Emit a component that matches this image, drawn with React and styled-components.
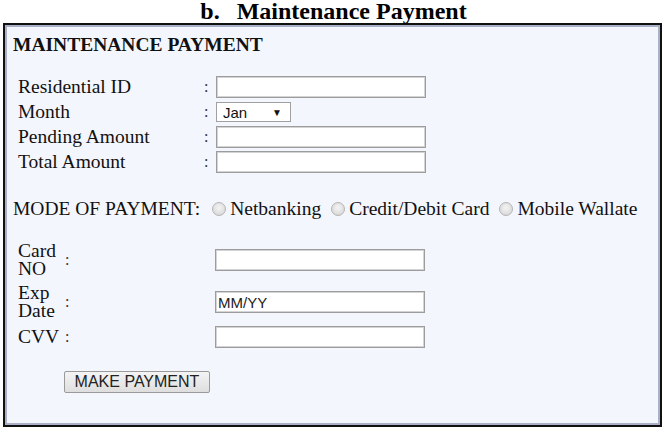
import React from "react";
import styled, { createGlobalStyle } from "styled-components";

const Global = createGlobalStyle`
  html, body { margin: 0; padding: 0; background: #fff; }
  body { font-family: "Liberation Serif", "Times New Roman", serif; color: #111; }
  * { box-sizing: border-box; }
`;

const Page = styled.div`
  width: 665px;
  height: 432px;
  overflow: hidden;
`;

const Caption = styled.h2`
  margin: 0;
  height: 23px;
  display: flex;
  justify-content: center;
  align-items: flex-start;
  gap: 17px;
  font-size: 24px;
  line-height: 23px;
  font-weight: bold;
  color: #000;
  padding-left: 2px;
`;

const Frame = styled.div`
  margin-left: 3px;
  width: 659px;
  height: 404px;
  border: 2px solid #111;
  box-shadow: inset 0 0 0 2px #aab0c8;
  background: #f4f6fd;
  padding: 9px 8px 0 8px;
`;

const Heading = styled.div`
  font-size: 19.5px;
  font-weight: bold;
  line-height: 22px;
  margin-bottom: 20px;
`;

const InfoGrid = styled.div`
  display: grid;
  grid-template-columns: 186px 12px 212px;
  grid-auto-rows: 22px;
  row-gap: 3px;
  padding-left: 5px;
  align-items: center;
`;

const Label = styled.div`
  font-size: 19.5px;
  line-height: 22px;
`;

const Colon = styled.div`
  font-size: 16px;
  line-height: 22px;
  color: #333;
`;

const TextBox = styled.input`
  display: block;
  width: 210px;
  height: 22px;
  border: 1px solid #9c9c9c;
  box-shadow: inset 0 0 0 1px #d4d4d4;
  background: #fff;
  padding: 0 2px;
  font-family: "Liberation Sans", Arial, sans-serif;
  font-size: 15px;
  color: #222;
  outline: none;
  &::placeholder { color: #222; }
`;

const Select = styled.div`
  width: 75px;
  height: 20px;
  border: 1px solid #a0a0a0;
  background: #fff;
  display: flex;
  align-items: center;
  justify-content: space-between;
  padding: 0 8px 0 6px;
  font-family: "Liberation Sans", Arial, sans-serif;
  font-size: 15px;
  color: #111;
`;

const Caret = styled.span`
  font-size: 10px;
`;

const ModeRow = styled.div`
  margin-top: 25px;
  display: flex;
  align-items: center;
  font-size: 19.5px;
  line-height: 22px;
  white-space: nowrap;
`;

const ModeTitle = styled.span`
  margin-right: 12px;
`;

const Option = styled.label`
  display: flex;
  align-items: center;
  gap: 4px;
  margin-right: 10px;
`;

const Radio = styled.span`
  width: 14px;
  height: 14px;
  border-radius: 50%;
  border: 1px solid #b4b4b4;
  background: radial-gradient(circle at 50% 40%, #f4f4f4, #d2d2d2);
`;

const CardGrid = styled.div`
  margin-top: 22px;
  display: grid;
  grid-template-columns: 47px 150px 210px;
  row-gap: 6px;
  padding-left: 5px;
  align-items: center;
`;

const StackLabel = styled.div`
  font-size: 19.5px;
  line-height: 18px;
`;

const Actions = styled.div`
  margin-top: 23px;
  padding-left: 51px;
`;

const Button = styled.button`
  display: block;
  width: 146px;
  height: 22px;
  border: 1px solid #9a9a9a;
  border-radius: 2px;
  background: linear-gradient(#f4f4f4, #dedede);
  font-family: "Liberation Sans", Arial, sans-serif;
  font-size: 16px;
  color: #222;
  padding: 0;
`;

export default function App() {
  return (
    <Page>
      <Global />
      <Caption>
        <span>b.</span>
        <span>Maintenance Payment</span>
      </Caption>
      <Frame>
        <Heading>MAINTENANCE PAYMENT</Heading>
        <InfoGrid>
          <Label>Residential ID</Label>
          <Colon>:</Colon>
          <TextBox />
          <Label>Month</Label>
          <Colon>:</Colon>
          <Select>
            <span>Jan</span>
            <Caret>▼</Caret>
          </Select>
          <Label>Pending Amount</Label>
          <Colon>:</Colon>
          <TextBox />
          <Label>Total Amount</Label>
          <Colon>:</Colon>
          <TextBox />
        </InfoGrid>
        <ModeRow>
          <ModeTitle>MODE OF PAYMENT:</ModeTitle>
          <Option><Radio />Netbanking</Option>
          <Option><Radio />Credit/Debit Card</Option>
          <Option><Radio />Mobile Wallate</Option>
        </ModeRow>
        <CardGrid>
          <StackLabel>Card<br />NO</StackLabel>
          <Colon>:</Colon>
          <TextBox />
          <StackLabel>Exp<br />Date</StackLabel>
          <Colon>:</Colon>
          <TextBox placeholder="MM/YY" />
          <Label>CVV</Label>
          <Colon>:</Colon>
          <TextBox />
        </CardGrid>
        <Actions>
          <Button>MAKE PAYMENT</Button>
        </Actions>
      </Frame>
    </Page>
  );
}
